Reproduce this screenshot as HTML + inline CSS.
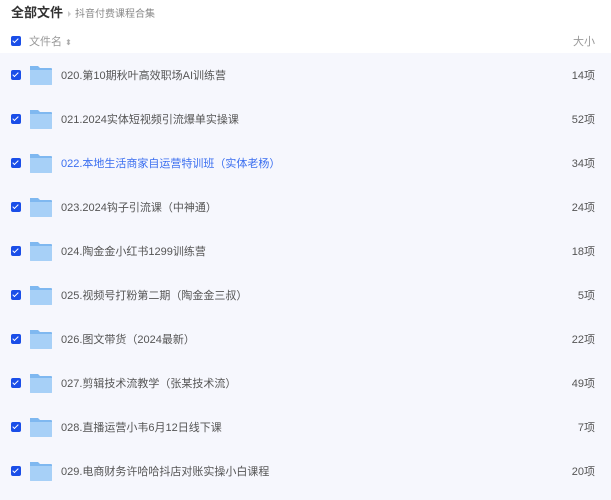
<!DOCTYPE html>
<html><head><meta charset="utf-8"><style>
body{margin:0;width:611px;height:500px;background:#fff;font-family:"Liberation Sans","Noto Sans CJK SC",sans-serif;overflow:hidden;position:relative}
.t{position:absolute;left:11px;top:2px;font-size:13px;font-weight:bold;color:#333}
.t span{font-size:10px;font-weight:normal;color:#888;margin-left:4px}
.t i{display:inline-block;width:0;height:0;border-left:3px solid #ccc;border-top:3px solid transparent;border-bottom:3px solid transparent;margin-left:5px;vertical-align:middle}
.cb{position:absolute;left:11px;width:10px;height:10px;background:#1a4ee8;border-radius:2px}
.cb:after{content:"";position:absolute;left:3px;top:1px;width:2px;height:5px;border:solid #fff;border-width:0 1.5px 1.5px 0;transform:rotate(45deg)}
.hd{position:absolute;top:33px;font-size:11px;color:#999}
.list{position:absolute;left:0;top:53px;width:611px;height:447px;background:#f6f7fd}
.row{position:absolute;left:0;width:611px;height:44px}
.row .cb{top:17px}
.f{position:absolute;left:29px;top:11px;width:24px;height:22px}
.n{position:absolute;left:61px;top:14px;font-size:11px;color:#555;white-space:nowrap}
.s{position:absolute;right:16px;top:14px;font-size:11px;color:#555}
</style></head><body>
<div class="t">全部文件<i></i><span>抖音付费课程合集</span></div>
<div class="cb" style="top:36px"></div>
<div class="hd" style="left:29px">文件名 <span style="font-size:8px;color:#aaa">⬍</span></div>
<div class="hd" style="right:16px">大小</div>
<div class="list">
<div class="row" style="top:0"><div class="cb"></div><svg class="f" viewBox="0 0 24 22"><path d="M1 2h8l2 2h11a1 1 0 0 1 1 1v15a1 1 0 0 1-1 1H2a1 1 0 0 1-1-1z" fill="#7fb8f0"/><path d="M1 6h22v14a1 1 0 0 1-1 1H2a1 1 0 0 1-1-1z" fill="#a7d0f7"/></svg><div class="n">020.第10期秋叶高效职场AI训练营</div><div class="s">14项</div></div>
<div class="row" style="top:44px"><div class="cb"></div><svg class="f" viewBox="0 0 24 22"><path d="M1 2h8l2 2h11a1 1 0 0 1 1 1v15a1 1 0 0 1-1 1H2a1 1 0 0 1-1-1z" fill="#7fb8f0"/><path d="M1 6h22v14a1 1 0 0 1-1 1H2a1 1 0 0 1-1-1z" fill="#a7d0f7"/></svg><div class="n">021.2024实体短视频引流爆单实操课</div><div class="s">52项</div></div>
<div class="row" style="top:88px"><div class="cb"></div><svg class="f" viewBox="0 0 24 22"><path d="M1 2h8l2 2h11a1 1 0 0 1 1 1v15a1 1 0 0 1-1 1H2a1 1 0 0 1-1-1z" fill="#7fb8f0"/><path d="M1 6h22v14a1 1 0 0 1-1 1H2a1 1 0 0 1-1-1z" fill="#a7d0f7"/></svg><div class="n" style="color:#3a6ef0">022.本地生活商家自运营特训班（实体老杨）</div><div class="s">34项</div></div>
<div class="row" style="top:132px"><div class="cb"></div><svg class="f" viewBox="0 0 24 22"><path d="M1 2h8l2 2h11a1 1 0 0 1 1 1v15a1 1 0 0 1-1 1H2a1 1 0 0 1-1-1z" fill="#7fb8f0"/><path d="M1 6h22v14a1 1 0 0 1-1 1H2a1 1 0 0 1-1-1z" fill="#a7d0f7"/></svg><div class="n">023.2024钩子引流课（中神通）</div><div class="s">24项</div></div>
<div class="row" style="top:176px"><div class="cb"></div><svg class="f" viewBox="0 0 24 22"><path d="M1 2h8l2 2h11a1 1 0 0 1 1 1v15a1 1 0 0 1-1 1H2a1 1 0 0 1-1-1z" fill="#7fb8f0"/><path d="M1 6h22v14a1 1 0 0 1-1 1H2a1 1 0 0 1-1-1z" fill="#a7d0f7"/></svg><div class="n">024.陶金金小红书1299训练营</div><div class="s">18项</div></div>
<div class="row" style="top:220px"><div class="cb"></div><svg class="f" viewBox="0 0 24 22"><path d="M1 2h8l2 2h11a1 1 0 0 1 1 1v15a1 1 0 0 1-1 1H2a1 1 0 0 1-1-1z" fill="#7fb8f0"/><path d="M1 6h22v14a1 1 0 0 1-1 1H2a1 1 0 0 1-1-1z" fill="#a7d0f7"/></svg><div class="n">025.视频号打粉第二期（陶金金三叔）</div><div class="s">5项</div></div>
<div class="row" style="top:264px"><div class="cb"></div><svg class="f" viewBox="0 0 24 22"><path d="M1 2h8l2 2h11a1 1 0 0 1 1 1v15a1 1 0 0 1-1 1H2a1 1 0 0 1-1-1z" fill="#7fb8f0"/><path d="M1 6h22v14a1 1 0 0 1-1 1H2a1 1 0 0 1-1-1z" fill="#a7d0f7"/></svg><div class="n">026.图文带货（2024最新）</div><div class="s">22项</div></div>
<div class="row" style="top:308px"><div class="cb"></div><svg class="f" viewBox="0 0 24 22"><path d="M1 2h8l2 2h11a1 1 0 0 1 1 1v15a1 1 0 0 1-1 1H2a1 1 0 0 1-1-1z" fill="#7fb8f0"/><path d="M1 6h22v14a1 1 0 0 1-1 1H2a1 1 0 0 1-1-1z" fill="#a7d0f7"/></svg><div class="n">027.剪辑技术流教学（张某技术流）</div><div class="s">49项</div></div>
<div class="row" style="top:352px"><div class="cb"></div><svg class="f" viewBox="0 0 24 22"><path d="M1 2h8l2 2h11a1 1 0 0 1 1 1v15a1 1 0 0 1-1 1H2a1 1 0 0 1-1-1z" fill="#7fb8f0"/><path d="M1 6h22v14a1 1 0 0 1-1 1H2a1 1 0 0 1-1-1z" fill="#a7d0f7"/></svg><div class="n">028.直播运营小韦6月12日线下课</div><div class="s">7项</div></div>
<div class="row" style="top:396px"><div class="cb"></div><svg class="f" viewBox="0 0 24 22"><path d="M1 2h8l2 2h11a1 1 0 0 1 1 1v15a1 1 0 0 1-1 1H2a1 1 0 0 1-1-1z" fill="#7fb8f0"/><path d="M1 6h22v14a1 1 0 0 1-1 1H2a1 1 0 0 1-1-1z" fill="#a7d0f7"/></svg><div class="n">029.电商财务许哈哈抖店对账实操小白课程</div><div class="s">20项</div></div>
</div>
</body></html>
